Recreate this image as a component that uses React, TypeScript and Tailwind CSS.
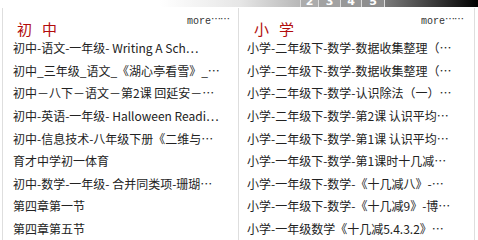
import React from "react";

const juniorItems = [
  "初中-语文-一年级- Writing A Sch…",
  "初中_三年级_语文_《湖心亭看雪》_…",
  "初中－八下－语文－第2课 回延安－…",
  "初中-英语-一年级- Halloween Readi…",
  "初中-信息技术-八年级下册《二维与…",
  "育才中学初一体育",
  "初中-数学-一年级- 合并同类项-珊瑚…",
  "第四章第一节",
  "第四章第五节",
];

const primaryItems = [
  "小学-二年级下-数学-数据收集整理（…",
  "小学-二年级下-数学-数据收集整理（…",
  "小学-二年级下-数学-认识除法（一）…",
  "小学-二年级下-数学-第2课 认识平均…",
  "小学-二年级下-数学-第1课 认识平均…",
  "小学-一年级下-数学-第1课时十几减…",
  "小学-一年级下-数学-《十几减八》-…",
  "小学-一年级下-数学-《十几减9》-博…",
  "小学-一年级数学《十几减5.4.3.2》…",
];

function TopStrip() {
  const tabs = [
    { n: "2", w: "w-[18px]", bg: "bg-[#acacac]" },
    { n: "3", w: "w-[22px]", bg: "bg-[#a2a2a2]" },
    { n: "4", w: "w-[21px]", bg: "bg-[#989898]" },
    { n: "5", w: "w-[23px]", bg: "bg-[#8e8e8e]" },
  ];
  return (
    <div className="flex h-[7px] overflow-hidden">
      <div className="w-[300px] bg-[linear-gradient(to_right,#ffffff_0px,#ffffff_160px,#e6e6e6_240px,#b8b8b8_300px)]" />
      {tabs.map((t) => (
        <div key={t.n} className={`${t.w} ${t.bg} h-[7px] overflow-hidden border-l border-[#dcdcdc]`}>
          <div className="-mt-[4px] text-center text-[11px] font-bold leading-[11px] text-white [font-family:'DejaVu_Sans',sans-serif]">
            {t.n}
          </div>
        </div>
      ))}
      <div className="flex-1 border-l border-[#dcdcdc] bg-[linear-gradient(to_right,#7a7a7a,#000000)]" />
    </div>
  );
}

function Panel({
  title,
  items,
  className,
  titlePad,
  itemPad,
  morePad,
}: {
  title: [string, string];
  items: string[];
  className: string;
  titlePad: string;
  itemPad: string;
  morePad: string;
}) {
  return (
    <div className={`h-[232px] border-r border-[#dedede] ${className}`}>
      <div className="flex h-[29px] items-start justify-between">
        <div
          className={`${titlePad} flex gap-[10px] pt-[13px] text-[15px] leading-[15px] text-[#b20c0c] [font-family:'Noto_Sans_CJK_SC',sans-serif]`}
        >
          <span>{title[0]}</span>
          <span>{title[1]}</span>
        </div>
        <div className={`${morePad} flex pt-[9px] text-[10px] leading-[10px] text-[#333]`}>
          <span className="[font-family:'Liberation_Mono',monospace]">more</span>
          <span className="-mt-[3px] tracking-[-1px] [font-family:'Noto_Sans_CJK_SC',sans-serif]">……</span>
        </div>
      </div>
      <ul className={itemPad}>
        {items.map((it, i) => (
          <li
            key={i}
            className="flex h-[22.6px] items-center overflow-hidden whitespace-nowrap text-[12px] text-[#222] [font-family:'Noto_Sans_CJK_SC',sans-serif]"
          >
            {it}
          </li>
        ))}
      </ul>
    </div>
  );
}

export default function App() {
  return (
    <div className="h-[240px] w-[478px] overflow-hidden bg-white">
      <TopStrip />
      <div className="mt-px flex pl-[2px]">
        <Panel
          title={["初", "中"]}
          items={juniorItems}
          className="w-[237px] border-l"
          titlePad="pl-[14px]"
          itemPad="pl-[10px] pr-[12px]"
          morePad="pr-[9px]"
        />
        <Panel
          title={["小", "学"]}
          items={primaryItems}
          className="w-[236px]"
          titlePad="pl-[15px]"
          itemPad="pl-[8px] pr-[10px]"
          morePad="pr-[11px]"
        />
      </div>
    </div>
  );
}
